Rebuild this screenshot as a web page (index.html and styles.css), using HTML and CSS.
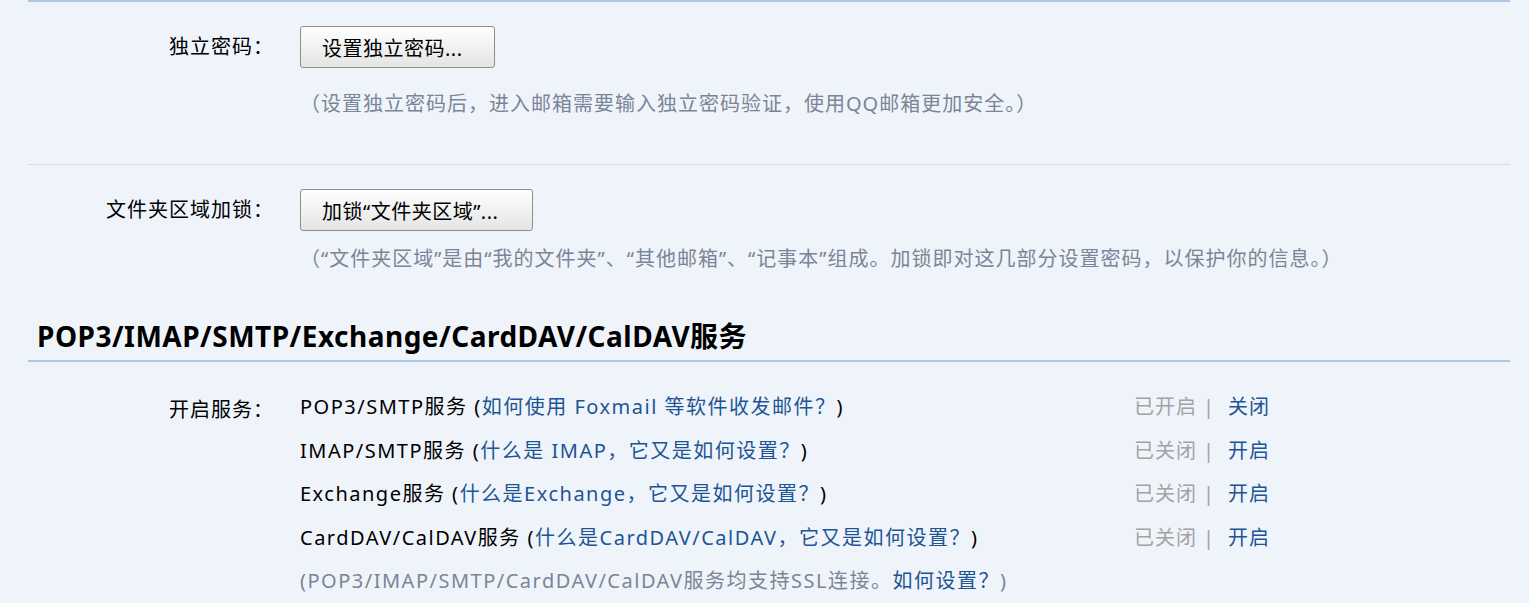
FILE: index.html
```html
<!DOCTYPE html>
<html lang="zh-CN">
<head>
  <meta charset="UTF-8" />
  <title>帐户设置</title>
  <link rel="stylesheet" href="styles.css">
</head>
<body>

<div class="page">

  <!-- 独立密码 -->
  <section class="block block-first">
    <div class="row">
      <div class="label">独立密码：</div>
      <div class="field">
        <button class="btn btn-pwd">设置独立密码...</button>
        <p class="hint hint-pwd">（设置独立密码后，进入邮箱需要输入独立密码验证，使用QQ邮箱更加安全。）</p>
      </div>
    </div>
  </section>

  <!-- 文件夹区域加锁 -->
  <section class="block block-lock">
    <div class="row">
      <div class="label">文件夹区域加锁：</div>
      <div class="field">
        <button class="btn btn-lock">加锁“文件夹区域”...</button>
        <p class="hint hint-lock">（“文件夹区域”是由“我的文件夹”、“其他邮箱”、“记事本”组成。加锁即对这几部分设置密码，以保护你的信息。）</p>
      </div>
    </div>
  </section>

  <!-- 服务 -->
  <h2 class="section-title">POP3/IMAP/SMTP/Exchange/CardDAV/CalDAV服务</h2>

  <section class="block block-service">
    <div class="row">
      <div class="label label-service">开启服务：</div>
      <div class="field">
        <div class="service">
          <span class="service-name">POP3/SMTP服务 (<a href="#">如何使用 Foxmail 等软件收发邮件？</a>)</span>
          <span class="status"><span class="state">已开启</span><span class="sep">|</span><a href="#">关闭</a></span>
        </div>
        <div class="service">
          <span class="service-name">IMAP/SMTP服务 (<a href="#">什么是 IMAP，它又是如何设置？</a>)</span>
          <span class="status"><span class="state">已关闭</span><span class="sep">|</span><a href="#">开启</a></span>
        </div>
        <div class="service">
          <span class="service-name">Exchange服务 (<a href="#">什么是Exchange，它又是如何设置？</a>)</span>
          <span class="status"><span class="state">已关闭</span><span class="sep">|</span><a href="#">开启</a></span>
        </div>
        <div class="service">
          <span class="service-name">CardDAV/CalDAV服务 (<a href="#">什么是CardDAV/CalDAV，它又是如何设置？</a>)</span>
          <span class="status"><span class="state">已关闭</span><span class="sep">|</span><a href="#">开启</a></span>
        </div>
        <p class="hint hint-ssl">(POP3/IMAP/SMTP/CardDAV/CalDAV服务均支持SSL连接。<a href="#">如何设置？</a>)</p>
      </div>
    </div>
  </section>

</div>

</body>
</html>
```

FILE: styles.css
```css
* {
  box-sizing: border-box;
}

html, body {
  margin: 0;
  padding: 0;
  background-color: #eff4fb;
  color: #000;
  font-family: "Noto Sans", "Noto Sans CJK SC", sans-serif;
  font-size: 20px;
  letter-spacing: 1px;
}

.page {
  width: 1482px;
  margin-left: 28px;
  border-top: 2px solid #a9c7ea;
}

a {
  color: #1d5494;
  text-decoration: none;
}

.block-first {
  padding: 24px 0 46px;
  border-bottom: 1px solid #d3dbe5;
}

.block-lock {
  padding: 24px 0 0;
}

.row {
  display: flex;
  align-items: flex-start;
}

.label {
  width: 246px;
  text-align: right;
  line-height: 42px;
  flex: none;
}

.field {
  margin-left: 26px;
  flex: 1;
}

.btn {
  display: block;
  height: 42px;
  padding: 0 0 0 21px;
  text-align: left;
  font-family: inherit;
  font-size: 20px;
  letter-spacing: 0.5px;
  color: #000;
  border: 1px solid #8e8e8e;
  border-radius: 3px;
  background: linear-gradient(#ffffff, #e4e4e4);
}

.btn-pwd {
  width: 195px;
}

.btn-lock {
  width: 233px;
}

.hint {
  margin: 0;
  color: #7b8597;
  line-height: 28px;
}

.hint-pwd {
  margin-top: 22px;
}

.hint-lock {
  margin-top: 14px;
}

.section-title {
  margin: 0;
  padding: 43px 0 4px 9px;
  font-size: 28px;
  font-weight: bold;
  letter-spacing: 0.5px;
  line-height: 40px;
  border-bottom: 2px solid #a9c7ea;
}

.block-service {
  padding-top: 23px;
}

.label-service {
  line-height: 49px;
}

.service {
  display: flex;
  height: 43.5px;
  line-height: 43.5px;
}

.service-name {
  width: 834px;
  flex: none;
  letter-spacing: 1.5px;
}

.status .state,
.status .sep {
  color: #a3a3a3;
}

.status .sep {
  margin: 0 13px 0 6px;
}

.hint-ssl {
  line-height: 43.5px;
  letter-spacing: 1.5px;
}
```
